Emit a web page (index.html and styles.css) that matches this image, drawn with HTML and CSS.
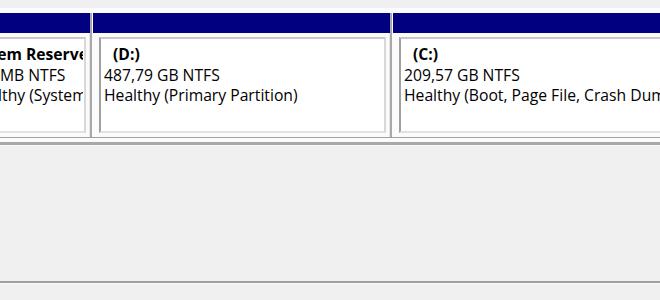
FILE: index.html
```html
<!DOCTYPE html>
<html>
<head>
<meta charset="utf-8">
<link rel="stylesheet" href="styles.css">
</head>
<body>
<div class="pane">
  <div class="top-gap"></div>
  <div class="disk-row">
    <div class="part part-sys">
      <div class="part-head"></div>
      <div class="part-body">
        <div class="part-box">
          <div class="box-text">
            <div class="label">System Reserved</div>
            <div class="line">500 MB NTFS</div>
            <div class="line">Healthy (System, Active, Primary Partition)</div>
          </div>
        </div>
      </div>
    </div>
    <div class="part part-d">
      <div class="part-head"></div>
      <div class="part-body">
        <div class="part-box">
          <div class="box-text">
            <div class="label">(D:)</div>
            <div class="line">487,79 GB NTFS</div>
            <div class="line">Healthy (Primary Partition)</div>
          </div>
        </div>
      </div>
    </div>
    <div class="part part-c">
      <div class="part-head"></div>
      <div class="part-body">
        <div class="part-box">
          <div class="box-text">
            <div class="label">(C:)</div>
            <div class="line">209,57 GB NTFS</div>
            <div class="line">Healthy (Boot, Page File, Crash Dump, Primary Partition)</div>
          </div>
        </div>
      </div>
    </div>
  </div>
  <div class="row-end"></div>
  <div class="empty-area"></div>
  <div class="status-line"></div>
</div>
</body>
</html>
```

FILE: styles.css
```css
html, body {
  margin: 0;
  padding: 0;
}
body {
  background: #f0f0f0;
  font-family: "Open Sans", "Noto Sans", sans-serif;
  font-size: 15.7px;
  color: #000;
  overflow: hidden;
  width: 660px;
  height: 300px;
}
.pane {
  display: flex;
  flex-direction: column;
  height: 300px;
}
.top-gap {
  height: 8px;
  flex: none;
}
.disk-row {
  display: flex;
  background: #fbfbfb;
  padding-top: 5px;
  border-bottom: 1px solid #a0a0a0;
  flex: none;
  overflow: hidden;
}
.part {
  display: flex;
  flex-direction: column;
  flex: none;
}
.part-sys {
  width: 130px;
  margin-left: -40px;
}
.part-d {
  width: 297px;
}
.part-c {
  width: 400px;
}
.part + .part {
  border-left: 2px solid #a8a8a8;
  padding-left: 1px;
}
.part-head {
  height: 20px;
  background: #000080;
}
.part-body {
  height: 104px;
  padding: 4px 3px 4px 6px;
  box-sizing: border-box;
  border-right: 1px solid #e6e6e6;
}
.part-box {
  height: 100%;
  box-sizing: border-box;
  background: #ffffff;
  border-top: 2px solid #c8c8c8;
  border-left: 2px solid #a0a0a0;
  border-right: 2px solid #d8d8d8;
  border-bottom: 2px solid #e2e2e2;
  padding: 5px 4px 0 3px;
  white-space: nowrap;
  line-height: 20.5px;
}
.part-sys .part-box {
  padding-right: 1px;
}
.box-text {
  overflow: hidden;
}
.label {
  font-weight: 700;
  padding-left: 9px;
}
.part-sys .box-text {
  margin-left: -2px;
}
.part-sys .label {
  margin-left: -13px;
}
.row-end {
  height: 4px;
  background: #fbfbfb;
  border-bottom: 3px solid #a8a8a8;
  flex: none;
}
.empty-area {
  height: 135px;
  border-top: 1px solid #fafafa;
  flex: none;
}
.status-line {
  border-top: 2px solid #a0a0a0;
  border-bottom: 1px solid #fbfbfb;
  flex: none;
}
```
